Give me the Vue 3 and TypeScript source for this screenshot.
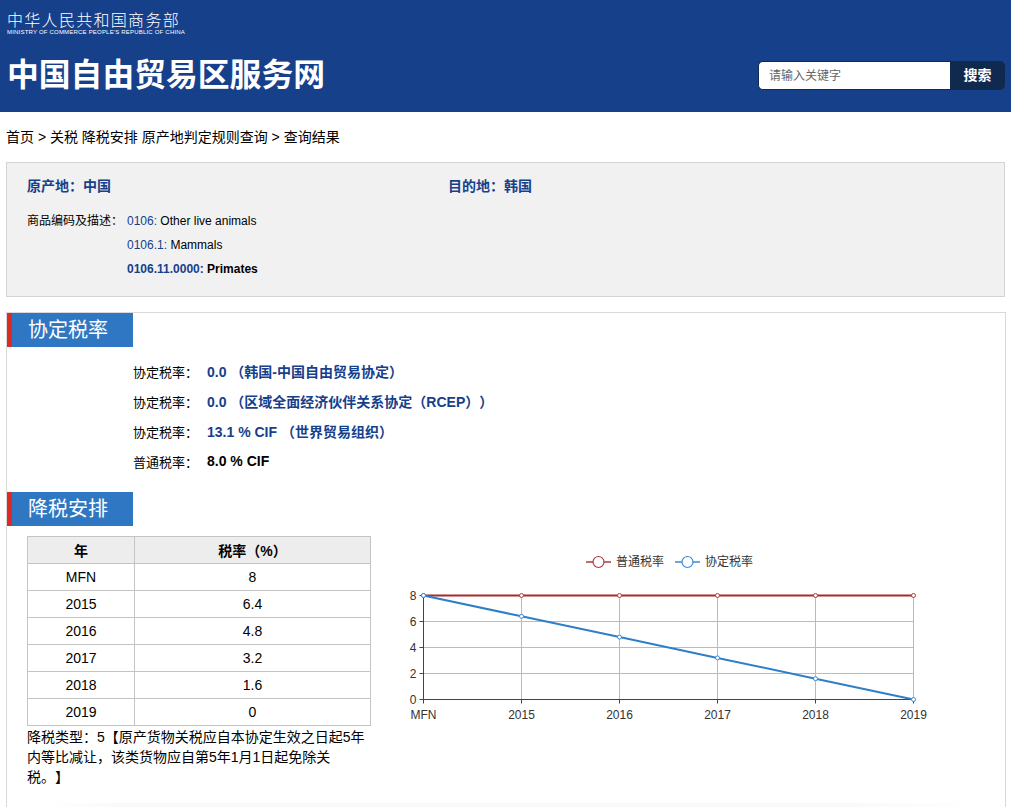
<script setup lang="ts">
const rates = [
  { label: '协定税率：', value: '0.0 （韩国-中国自由贸易协定）', plain: false },
  { label: '协定税率：', value: '0.0 （区域全面经济伙伴关系协定（RCEP））', plain: false },
  { label: '协定税率：', value: '13.1 % CIF （世界贸易组织）', plain: false },
  { label: '普通税率：', value: '8.0 % CIF', plain: true },
]

const rows = [
  { year: 'MFN', rate: 8 },
  { year: '2015', rate: 6.4 },
  { year: '2016', rate: 4.8 },
  { year: '2017', rate: 3.2 },
  { year: '2018', rate: 1.6 },
  { year: '2019', rate: 0 },
]

// chart geometry, in svg coordinates
const left = 35.5
const step = 98
const bottom = 163.5
const unit = 13

const xAt = (i: number) => left + i * step
const yAt = (v: number) => bottom - v * unit

const mfnPoints = rows.map((_, i) => `${xAt(i)},${yAt(8)}`).join(' ')
const ratePoints = rows.map((r, i) => `${xAt(i)},${yAt(r.rate)}`).join(' ')
</script>

<template>
  <div class="page">
    <header class="top">
      <div class="brand">
        <div class="ministry">
          <div class="ministry-cn">中华人民共和国商务部</div>
          <div class="ministry-en">MINISTRY OF COMMERCE PEOPLE'S REPUBLIC OF CHINA</div>
        </div>
        <h1>中国自由贸易区服务网</h1>
      </div>
      <form class="search" @submit.prevent>
        <input placeholder="请输入关键字" />
        <button type="submit">搜索</button>
      </form>
    </header>

    <div class="crumbs">首页 &gt; 关税 降税安排 原产地判定规则查询 &gt; 查询结果</div>

    <section class="info">
      <div class="places">
        <div class="place">原产地：中国</div>
        <div class="place">目的地：韩国</div>
      </div>
      <div class="codes">
        <div class="codes-label">商品编码及描述：</div>
        <div class="codes-list">
          <div><span class="code">0106:</span> Other live animals</div>
          <div><span class="code">0106.1:</span> Mammals</div>
          <div class="current"><span class="code">0106.11.0000:</span> Primates</div>
        </div>
      </div>
    </section>

    <section class="panel">
      <h2 class="bar">协定税率</h2>
      <ul class="rates">
        <li v-for="(r, i) in rates" :key="i">
          <span class="rate-label">{{ r.label }}</span>
          <strong :class="{ plain: r.plain }">{{ r.value }}</strong>
        </li>
      </ul>

      <h2 class="bar">降税安排</h2>
      <div class="schedule">
        <div class="schedule-left">
          <table>
            <thead>
              <tr><th>年</th><th>税率（%）</th></tr>
            </thead>
            <tbody>
              <tr v-for="r in rows" :key="r.year">
                <td>{{ r.year }}</td>
                <td>{{ r.rate }}</td>
              </tr>
            </tbody>
          </table>
          <p class="note">降税类型：5【原产货物关税应自本协定生效之日起5年内等比减让，该类货物应自第5年1月1日起免除关税。】</p>
        </div>

        <svg class="chart" width="560" height="200" viewBox="0 0 560 200">
          <g class="legend">
            <line x1="198" y1="26" x2="223" y2="26" stroke="#b03a3e" stroke-width="1.500" />
            <circle cx="210.500" cy="26" r="5.500" fill="#fff" stroke="#b03a3e" stroke-width="1.200" />
            <text x="228" y="30">普通税率</text>
            <line x1="287" y1="26" x2="312" y2="26" stroke="#3e8ad0" stroke-width="1.500" />
            <circle cx="299.500" cy="26" r="5.500" fill="#fff" stroke="#3e8ad0" stroke-width="1.200" />
            <text x="317" y="30">协定税率</text>
          </g>

          <line v-for="v in [2, 4, 6]" :key="v" :x1="left" :y1="yAt(v)" :x2="xAt(5)" :y2="yAt(v)" class="grid" />
          <line v-for="(r, i) in rows" :key="r.year" :x1="xAt(i)" :y1="yAt(8)" :x2="xAt(i)" :y2="bottom" class="grid" />

          <line :x1="left" :y1="yAt(8)" :x2="left" :y2="bottom" class="axis" />
          <line :x1="left" :y1="bottom" :x2="xAt(5)" :y2="bottom" class="axis" />
          <line v-for="v in [0, 2, 4, 6, 8]" :key="v" :x1="left - 4" :y1="yAt(v)" :x2="left" :y2="yAt(v)" class="axis" />
          <line v-for="(r, i) in rows" :key="r.year" :x1="xAt(i)" :y1="bottom" :x2="xAt(i)" :y2="bottom + 4" class="axis" />

          <text v-for="v in [0, 2, 4, 6, 8]" :key="v" :x="left - 7" :y="yAt(v) + 4" text-anchor="end" class="tick">{{ v }}</text>
          <text v-for="(r, i) in rows" :key="r.year" :x="xAt(i)" :y="bottom + 19" text-anchor="middle" class="tick">{{ r.year }}</text>

          <polyline :points="mfnPoints" fill="none" stroke="#a82a2e" stroke-width="2" />
          <circle v-for="(r, i) in rows" :key="r.year" :cx="xAt(i)" :cy="yAt(8)" r="2" fill="#fff" stroke="#b03a3e" />
          <polyline :points="ratePoints" fill="none" stroke="#2f7fc8" stroke-width="2" />
          <circle v-for="(r, i) in rows" :key="r.year" :cx="xAt(i)" :cy="yAt(r.rate)" r="2" fill="#fff" stroke="#3e8ad0" />
        </svg>
      </div>
      <div class="next-edge"></div>
    </section>
  </div>
</template>

<style scoped>
.page {
  height: 807px;
  overflow: hidden;
  font-family: "Liberation Sans", "Noto Sans CJK SC", sans-serif;
  font-size: 12px;
  color: #000;
  text-spacing-trim: space-all;
}

.top {
  height: 112px;
  background: #17408b;
  display: flex;
  justify-content: space-between;
  align-items: flex-start;
  padding: 12px 6px 0 7px;
  box-sizing: border-box;
}

.ministry {
  color: #fff;
  margin-bottom: 20px;
}

.ministry-cn {
  font-size: 16px;
  line-height: 17px;
  letter-spacing: 1.3px;
  font-weight: 300;
}

.ministry-en {
  font-size: 6px;
  line-height: 6px;
  letter-spacing: 0.2px;
  white-space: nowrap;
}

h1 {
  margin: 0;
  font-size: 31.8px;
  line-height: 40px;
  font-weight: 700;
  color: #fff;
}

.search {
  display: flex;
  height: 29px;
  margin-top: 49px;
}

.search input {
  width: 192px;
  box-sizing: border-box;
  border: 1px solid #10294f;
  border-right: none;
  border-radius: 5px 0 0 5px;
  padding: 0 10px;
  font: inherit;
  background: #fff;
}

.search input::placeholder {
  color: #666;
}

.search button {
  width: 55px;
  border: none;
  border-radius: 0 5px 5px 0;
  padding: 0 0 3px;
  background: #10294f;
  color: #fff;
  font: inherit;
  font-size: 14px;
  font-weight: 700;
}

.crumbs {
  font-size: 14px;
  line-height: 20px;
  padding: 15px 6px 15px;
}

.info {
  margin: 0 6px;
  height: 135px;
  box-sizing: border-box;
  background: #f1f1f2;
  border: 1px solid #d4d4d4;
  padding: 13px 20px;
}

.places {
  display: flex;
  font-size: 14px;
  font-weight: 700;
  line-height: 20px;
  color: #17408b;
}

.place {
  width: 421px;
}

.codes {
  display: flex;
  margin-top: 13px;
  line-height: 24px;
}

.codes-label {
  width: 100px;
}

.code {
  color: #17408b;
}

.current {
  font-weight: 700;
}

.panel {
  margin: 15px 5px 0 6px;
  height: 520px;
  box-sizing: border-box;
  border: 1px solid #d9d9d9;
}

.bar {
  margin: 0;
  width: 121px;
  height: 34px;
  border-left: 5px solid #dd2a25;
  background: #2f77c2;
  background-clip: padding-box;
  color: #fff;
  font-size: 20px;
  font-weight: 400;
  line-height: 34px;
  text-indent: 16px;
}

.rates {
  list-style: none;
  margin: 0;
  padding: 9px 0 16px 126px;
}

.rates li {
  display: flex;
  height: 30px;
  align-items: center;
  font-size: 13px;
}

.rate-label {
  width: 74px;
}

.rates strong {
  color: #17408b;
  font-size: 14px;
}

.rates strong.plain {
  color: #000;
}

.schedule {
  display: flex;
  padding: 10px 0 0 20px;
}

.schedule-left {
  width: 344px;
}

table {
  width: 344px;
  border-collapse: collapse;
  font-size: 14px;
}

th,
td {
  height: 26px;
  padding: 0;
  border: 1px solid #c4c4c4;
  text-align: center;
}

th {
  background: #ededed;
}

th:first-child,
td:first-child {
  width: 106px;
}

.note {
  margin: 1px 0 0;
  font-size: 14px;
  line-height: 20px;
}

.chart {
  margin: 0 0 0 17px;
  flex: none;
  display: block;
}

.chart text {
  font-family: "Liberation Sans", "Noto Sans CJK SC", sans-serif;
  font-size: 12px;
  fill: #333;
}

.grid {
  stroke: #bbb;
  stroke-width: 1;
}

.axis {
  stroke: #444;
  stroke-width: 1;
}

.next-edge {
  height: 8px;
  margin: 16px 20px 0 40px;
  background: linear-gradient(to right, transparent, #f9f9f9 8%, #f9f9f9 85%, transparent);
}
</style>
